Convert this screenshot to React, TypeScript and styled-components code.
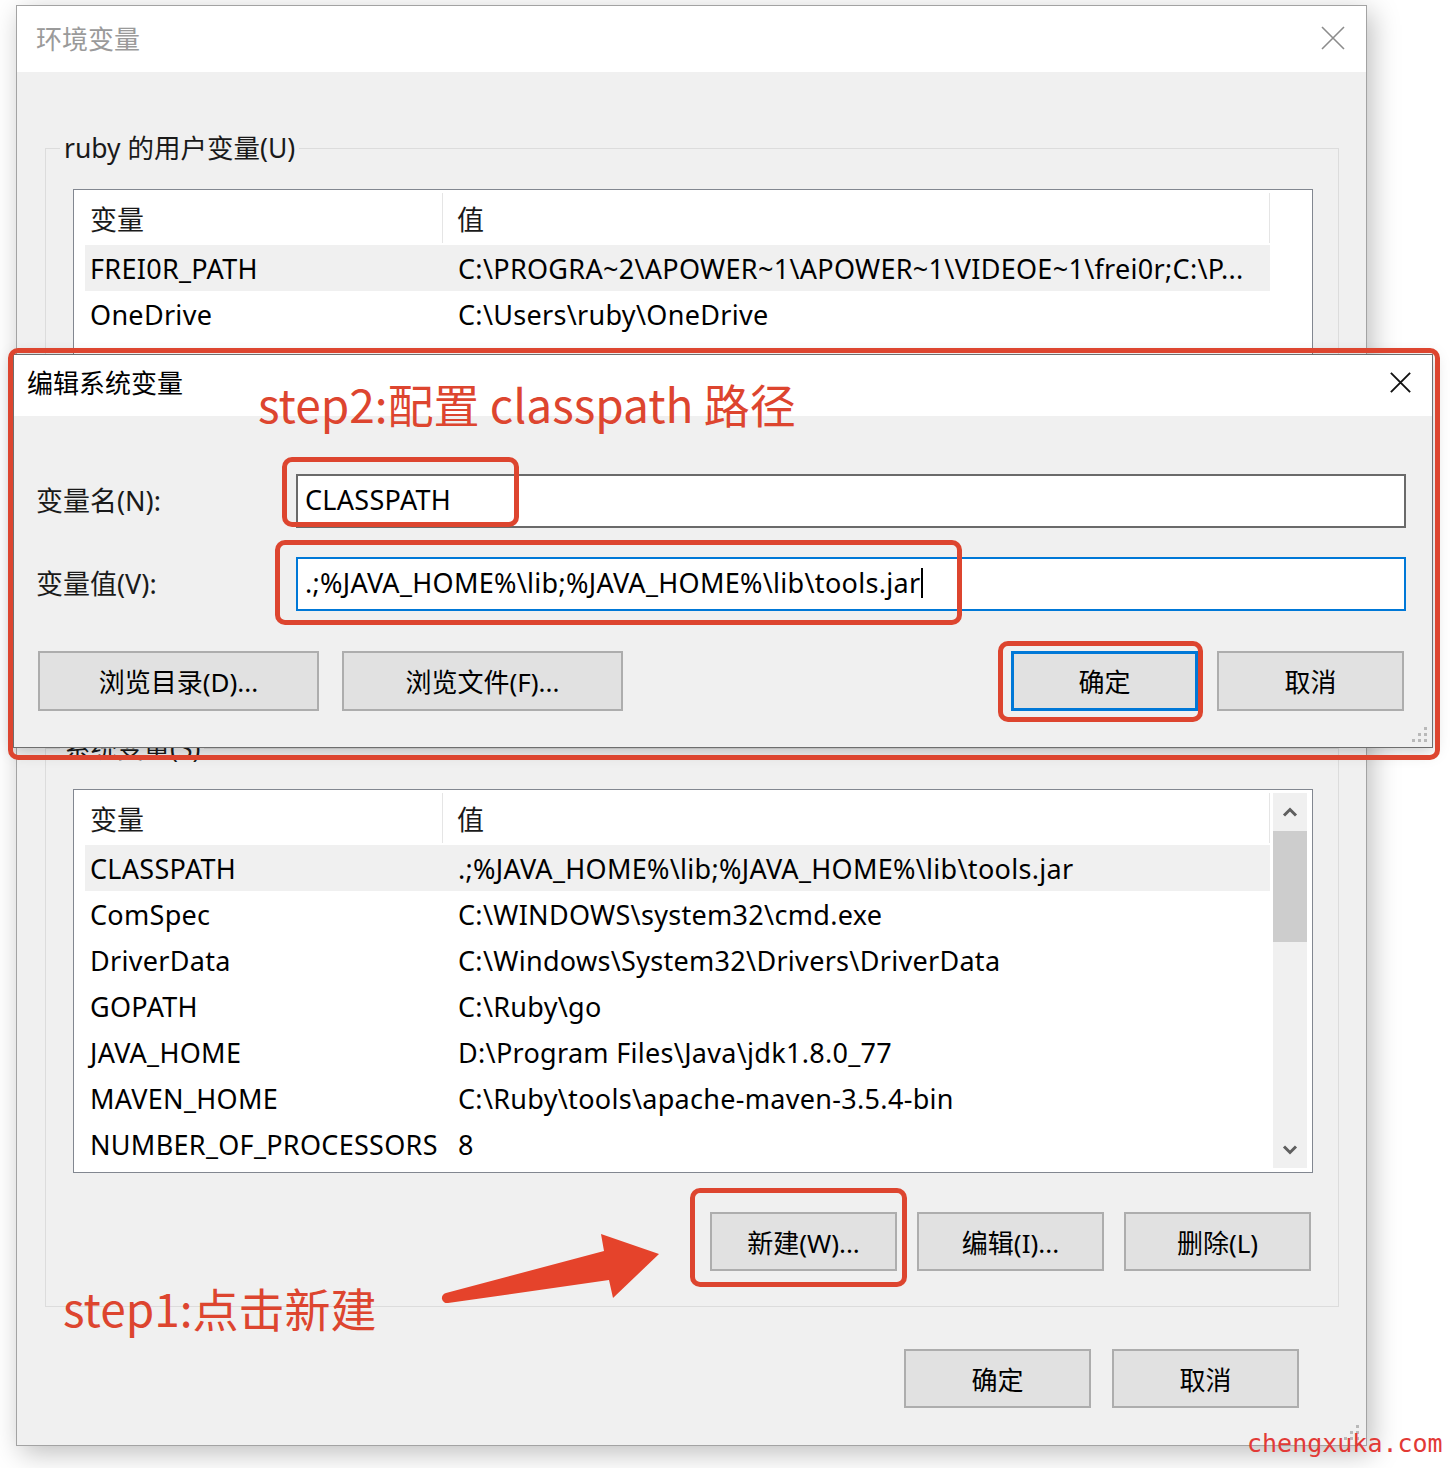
import React from "react";
import styled, { createGlobalStyle } from "styled-components";

const UI_FONT = `"Noto Sans", "Noto Sans CJK SC", sans-serif`;
const NOTE_FONT = `"Noto Sans CJK SC", "Noto Sans", sans-serif`;
const RED = "#dd452f";

const GlobalStyle = createGlobalStyle`
  html, body { margin: 0; padding: 0; background: #ffffff; }
  *, *::before, *::after { box-sizing: border-box; }
`;

const Page = styled.div`
  position: relative;
  width: 1452px;
  height: 1468px;
  overflow: hidden;
  background: #ffffff;
  padding: 5px 0 0 16px;
  font-family: ${UI_FONT};
  color: #000;
`;

const Window = styled.div`
  position: relative;
  width: 1351px;
  height: 1441px;
  display: flex;
  flex-direction: column;
  background: #f0f0f0;
  border: 1px solid #a3a3a3;
  box-shadow: 5px 7px 26px rgba(0, 0, 0, 0.26);
`;

const TitleBar = styled.div<{ $height: number; $padLeft: number; $padRight: number; $lift: number; $inactive?: boolean }>`
  flex: none;
  height: ${(p) => p.$height}px;
  background: #ffffff;
  display: flex;
  align-items: center;
  justify-content: space-between;
  padding: 0 ${(p) => p.$padRight}px ${(p) => p.$lift}px ${(p) => p.$padLeft}px;
  font-size: 26px;
  color: ${(p) => (p.$inactive ? "#9a9a9a" : "#000")};
`;

const WindowBody = styled.div`
  flex: 1;
  display: flex;
  flex-direction: column;
  padding: 60px 27px 0 28px;
`;

const GroupBox = styled.fieldset<{ $height?: number; $top?: number }>`
  margin: ${(p) => p.$top ?? 0}px 0 0 0;
  padding: 0;
  min-width: 0;
  border: 1px solid #dcdcdc;
  ${(p) => (p.$height ? `height: ${p.$height}px;` : "")}
`;

const GroupLegend = styled.legend`
  margin-left: 14px;
  padding: 0 4px;
  font-size: 26.5px;
  line-height: 32px;
  color: #1a1a1a;
`;

const GroupContent = styled.div`
  display: flex;
  flex-direction: column;
  padding: 25px 25px 35px 27px;
`;

const ListBox = styled.div<{ $height: number }>`
  flex: none;
  height: ${(p) => p.$height}px;
  border: 1px solid #828790;
  background: #ffffff;
  display: flex;
  align-items: stretch;
  padding: 0 4px 0 11px;
  overflow: hidden;
`;

const ListTable = styled.div`
  flex: none;
  width: 1185px;
  display: flex;
  flex-direction: column;
`;

const ListHeader = styled.div`
  flex: none;
  display: grid;
  grid-template-columns: 358px 827px;
  height: 55px;
`;

const HeaderCell = styled.div<{ $pad: number }>`
  display: flex;
  align-items: center;
  margin: 3px 0 2px;
  padding-left: ${(p) => p.$pad}px;
  border-right: 1px solid #e5e5e5;
  font-size: 27px;
  color: #1a1a1a;
`;

const ListRow = styled.div<{ $selected?: boolean }>`
  flex: none;
  display: grid;
  grid-template-columns: 358px 827px;
  height: 46px;
  align-items: center;
  background: ${(p) => (p.$selected ? "#f0f0f0" : "transparent")};
  font-size: 27px;
  letter-spacing: 0.3px;
`;

const Cell = styled.div<{ $pad: number }>`
  padding-left: ${(p) => p.$pad}px;
  white-space: nowrap;
  overflow: hidden;
`;

const ScrollBar = styled.div`
  flex: none;
  width: 34px;
  margin: 3px 0 4px 3px;
  background: #f0f0f0;
  display: flex;
  flex-direction: column;
`;

const ScrollArrow = styled.div<{ $height: number }>`
  flex: none;
  height: ${(p) => p.$height}px;
  display: flex;
  align-items: center;
  justify-content: center;
`;

const ScrollTrack = styled.div`
  flex: 1;
`;

const ScrollThumb = styled.div`
  height: 111px;
  background: #cdcdcd;
`;

const ButtonRow = styled.div<{ $gap: number; $top: number; $right?: number }>`
  display: flex;
  justify-content: flex-end;
  gap: ${(p) => p.$gap}px;
  margin-top: ${(p) => p.$top}px;
  margin-right: ${(p) => p.$right ?? 0}px;
`;

const PushButton = styled.button<{ $width: number; $height: number; $isDefault?: boolean }>`
  flex: none;
  width: ${(p) => p.$width}px;
  height: ${(p) => p.$height}px;
  padding: 0;
  margin: 0;
  display: flex;
  align-items: center;
  justify-content: center;
  background: #e1e1e1;
  border: ${(p) => (p.$isDefault ? "3px solid #0078d7" : "2px solid #adadad")};
  border-radius: 0;
  font-family: ${UI_FONT};
  font-size: 26px;
  color: #000;
`;

const Dialog = styled.div`
  position: absolute;
  left: 13px;
  top: 354px;
  width: 1420px;
  height: 394px;
  display: flex;
  flex-direction: column;
  background: #f0f0f0;
  border: 1px solid #6e6e6e;
  box-shadow: 0 3px 16px rgba(0, 0, 0, 0.22);
`;

const DialogBody = styled.div`
  flex: 1;
  display: flex;
  flex-direction: column;
  padding: 58px 26px 0 22px;
`;

const FieldGrid = styled.div`
  display: grid;
  grid-template-columns: 260px 1fr;
  row-gap: 29px;
  align-items: center;
`;

const FieldLabel = styled.div`
  font-size: 27px;
  color: #1a1a1a;
  padding-bottom: 3px;
`;

const TextBox = styled.div<{ $focused?: boolean }>`
  height: 54px;
  display: flex;
  align-items: center;
  padding: 0 0 3px 7px;
  background: #ffffff;
  border: 2px solid ${(p) => (p.$focused ? "#0078d7" : "#6a6a6a")};
  font-size: 27px;
  letter-spacing: 0.3px;
  white-space: nowrap;
`;

const Caret = styled.span`
  display: inline-block;
  width: 2px;
  height: 30px;
  margin-left: 1px;
  background: #000;
`;

const DialogButtons = styled.div`
  display: flex;
  justify-content: space-between;
  margin-top: 40px;
  padding: 0 2px;
`;

const ButtonGroup = styled.div<{ $gap: number }>`
  display: flex;
  gap: ${(p) => p.$gap}px;
`;

const Grip = styled.div<{ $right: number; $bottom: number }>`
  position: absolute;
  right: ${(p) => p.$right}px;
  bottom: ${(p) => p.$bottom}px;
  line-height: 0;
`;

const RedFrame = styled.div<{ $x: number; $y: number; $w: number; $h: number }>`
  position: absolute;
  left: ${(p) => p.$x}px;
  top: ${(p) => p.$y}px;
  width: ${(p) => p.$w}px;
  height: ${(p) => p.$h}px;
  border: 5px solid ${RED};
  border-radius: 10px;
  pointer-events: none;
`;

const StepNote = styled.div<{ $x: number; $y: number }>`
  position: absolute;
  left: ${(p) => p.$x}px;
  top: ${(p) => p.$y}px;
  font-family: ${NOTE_FONT};
  font-size: 46px;
  line-height: 46px;
  color: ${RED};
  white-space: nowrap;
`;

const ArrowMark = styled.svg`
  position: absolute;
  left: 430px;
  top: 1220px;
`;

const Watermark = styled.div`
  position: absolute;
  left: 1247px;
  top: 1431px;
  font-family: "DejaVu Sans Mono", "Liberation Mono", monospace;
  font-size: 25px;
  line-height: 25px;
  color: #e23a36;
  white-space: nowrap;
`;

const CloseIcon: React.FC<{ size: number; color: string; stroke: number }> = ({ size, color, stroke }) => (
  <svg width={size} height={size} viewBox="0 0 24 24">
    <path d="M1 1 L23 23 M23 1 L1 23" stroke={color} strokeWidth={stroke} fill="none" />
  </svg>
);

const Chevron: React.FC<{ up?: boolean }> = ({ up }) => (
  <svg width={16} height={10} viewBox="0 0 16 10">
    <polyline
      points={up ? "2,8.5 8,2.5 14,8.5" : "2,1.5 8,7.5 14,1.5"}
      stroke="#5f5f5f"
      strokeWidth={3}
      fill="none"
    />
  </svg>
);

const GripDots: React.FC = () => (
  <svg width={18} height={18} viewBox="0 0 18 18">
    {[
      [14, 2],
      [8, 8],
      [14, 8],
      [2, 14],
      [8, 14],
      [14, 14],
    ].map(([x, y], i) => (
      <rect key={i} x={x} y={y} width={3} height={3} fill="#b9b9b9" />
    ))}
  </svg>
);

type Row = [string, string];

const userRows: Row[] = [
  ["FREI0R_PATH", "C:\\PROGRA~2\\APOWER~1\\APOWER~1\\VIDEOE~1\\frei0r;C:\\P..."],
  ["OneDrive", "C:\\Users\\ruby\\OneDrive"],
];

const systemRows: Row[] = [
  ["CLASSPATH", ".;%JAVA_HOME%\\lib;%JAVA_HOME%\\lib\\tools.jar"],
  ["ComSpec", "C:\\WINDOWS\\system32\\cmd.exe"],
  ["DriverData", "C:\\Windows\\System32\\Drivers\\DriverData"],
  ["GOPATH", "C:\\Ruby\\go"],
  ["JAVA_HOME", "D:\\Program Files\\Java\\jdk1.8.0_77"],
  ["MAVEN_HOME", "C:\\Ruby\\tools\\apache-maven-3.5.4-bin"],
  ["NUMBER_OF_PROCESSORS", "8"],
];

const VarTable: React.FC<{ rows: Row[] }> = ({ rows }) => (
  <ListTable>
    <ListHeader>
      <HeaderCell $pad={5}>变量</HeaderCell>
      <HeaderCell $pad={14}>值</HeaderCell>
    </ListHeader>
    {rows.map(([name, value], i) => (
      <ListRow key={name} $selected={i === 0}>
        <Cell $pad={5}>{name}</Cell>
        <Cell $pad={15}>{value}</Cell>
      </ListRow>
    ))}
  </ListTable>
);

export default function App() {
  return (
    <>
      <GlobalStyle />
      <Page>
        <Window>
          <TitleBar $height={66} $padLeft={19} $padRight={21} $lift={3} $inactive>
            <span>环境变量</span>
            <CloseIcon size={24} color="#8c8c8c" stroke={1.6} />
          </TitleBar>
          <WindowBody>
            <GroupBox $height={560}>
              <GroupLegend>ruby 的用户变量(U)</GroupLegend>
              <GroupContent>
                <ListBox $height={366}>
                  <VarTable rows={userRows} />
                </ListBox>
                <ButtonRow $gap={20} $top={39} $right={2}>
                  <PushButton $width={187} $height={59}>新建(N)...</PushButton>
                  <PushButton $width={187} $height={59}>编辑(E)...</PushButton>
                  <PushButton $width={187} $height={59}>删除(D)</PushButton>
                </ButtonRow>
              </GroupContent>
            </GroupBox>

            <GroupBox $top={40}>
              <GroupLegend>系统变量(S)</GroupLegend>
              <GroupContent>
                <ListBox $height={384}>
                  <VarTable rows={systemRows} />
                  <ScrollBar>
                    <ScrollArrow $height={38}>
                      <Chevron up />
                    </ScrollArrow>
                    <ScrollThumb />
                    <ScrollTrack />
                    <ScrollArrow $height={37}>
                      <Chevron />
                    </ScrollArrow>
                  </ScrollBar>
                </ListBox>
                <ButtonRow $gap={20} $top={39} $right={2}>
                  <PushButton $width={187} $height={59}>新建(W)...</PushButton>
                  <PushButton $width={187} $height={59}>编辑(I)...</PushButton>
                  <PushButton $width={187} $height={59}>删除(L)</PushButton>
                </ButtonRow>
              </GroupContent>
            </GroupBox>

            <ButtonRow $gap={21} $top={42} $right={40}>
              <PushButton $width={187} $height={59}>确定</PushButton>
              <PushButton $width={187} $height={59}>取消</PushButton>
            </ButtonRow>
          </WindowBody>
          <Grip $right={6} $bottom={4}>
            <GripDots />
          </Grip>
        </Window>

        <Dialog>
          <TitleBar $height={61} $padLeft={13} $padRight={21} $lift={7}>
            <span>编辑系统变量</span>
            <CloseIcon size={21} color="#111" stroke={2.2} />
          </TitleBar>
          <DialogBody>
            <FieldGrid>
              <FieldLabel>变量名(N):</FieldLabel>
              <TextBox>CLASSPATH</TextBox>
              <FieldLabel>变量值(V):</FieldLabel>
              <TextBox $focused>
                .;%JAVA_HOME%\lib;%JAVA_HOME%\lib\tools.jar
                <Caret />
              </TextBox>
            </FieldGrid>
            <DialogButtons>
              <ButtonGroup $gap={23}>
                <PushButton $width={281} $height={60}>浏览目录(D)...</PushButton>
                <PushButton $width={281} $height={60}>浏览文件(F)...</PushButton>
              </ButtonGroup>
              <ButtonGroup $gap={19}>
                <PushButton $width={187} $height={60} $isDefault>确定</PushButton>
                <PushButton $width={187} $height={60}>取消</PushButton>
              </ButtonGroup>
            </DialogButtons>
          </DialogBody>
          <Grip $right={4} $bottom={4}>
            <GripDots />
          </Grip>
        </Dialog>

        <RedFrame $x={8} $y={348} $w={1432} $h={412} />
        <RedFrame $x={282} $y={457} $w={237} $h={70} />
        <RedFrame $x={275} $y={540} $w={687} $h={85} />
        <RedFrame $x={998} $y={641} $w={205} $h={81} />
        <RedFrame $x={690} $y={1188} $w={217} $h={99} />

        <StepNote $x={258} $y={380}>step2:配置 classpath 路径</StepNote>
        <StepNote $x={63} $y={1284}>step1:点击新建</StepNote>

        <ArrowMark width={240} height={100} viewBox="0 0 240 100">
          <path
            d="M16 73 L174 31 L171 14 L229 34 L183 78 L179 60 L18 83 A5 5 0 0 1 16 73 Z"
            fill="#e5432b"
          />
        </ArrowMark>

        <Watermark>chengxuka.com</Watermark>
      </Page>
    </>
  );
}
